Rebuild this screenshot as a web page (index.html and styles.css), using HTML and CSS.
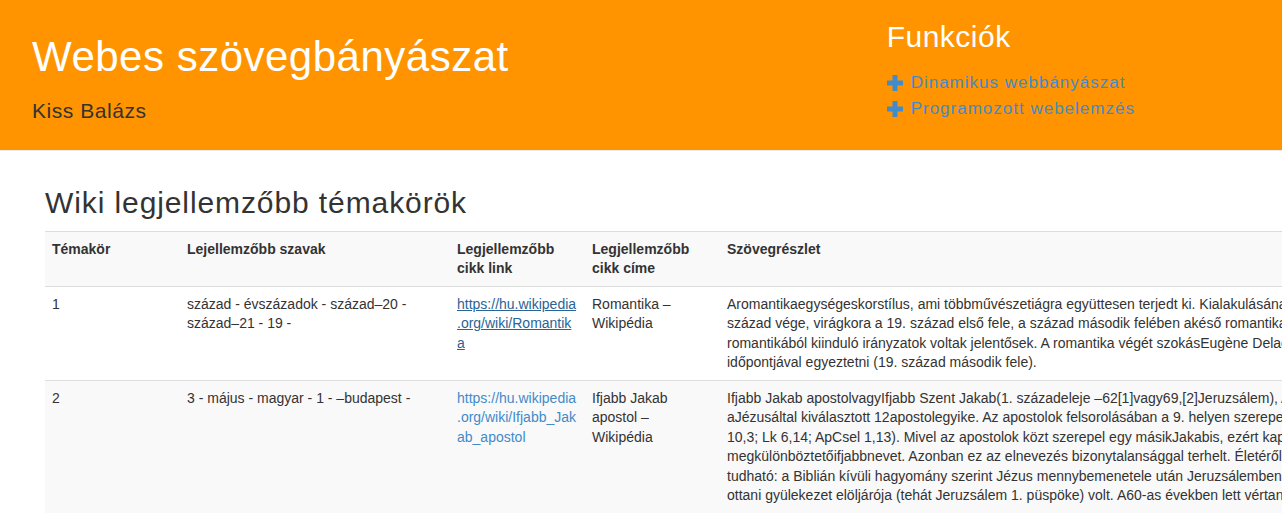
FILE: index.html
```html
<!DOCTYPE html>
<html lang="hu">
<head>
<meta charset="utf-8">
<title>Webes szövegbányászat</title>
<link rel="stylesheet" href="styles.css">
</head>
<body>
<header class="site-header">
  <div class="brand">
    <h1 class="brand-title">Webes szövegbányászat</h1>
    <p class="brand-author">Kiss Balázs</p>
  </div>
  <nav class="features">
    <h3 class="features-title">Funkciók</h3>
    <ul class="features-list">
      <li><a href="#" class="feature-link"><svg class="plus" viewBox="0 0 16 16" width="16" height="16"><rect x="5.5" y="0" width="5" height="16"/><rect x="0" y="5.5" width="16" height="5"/></svg><span>Dinamikus webbányászat</span></a></li>
      <li><a href="#" class="feature-link"><svg class="plus" viewBox="0 0 16 16" width="16" height="16"><rect x="5.5" y="0" width="5" height="16"/><rect x="0" y="5.5" width="16" height="5"/></svg><span>Programozott webelemzés</span></a></li>
    </ul>
  </nav>
</header>
<main class="content">
  <h2 class="page-title">Wiki legjellemzőbb témakörök</h2>
  <table class="topics">
    <colgroup>
      <col class="c-narrow"><col class="c-wide"><col class="c-narrow"><col class="c-narrow"><col class="c-text">
    </colgroup>
    <tbody>
      <tr>
        <th>Témakör</th>
        <th>Lejellemzőbb szavak</th>
        <th>Legjellemzőbb cikk link</th>
        <th>Legjellemzőbb cikk címe</th>
        <th>Szövegrészlet</th>
      </tr>
      <tr>
        <td>1</td>
        <td>század - évszázadok - század–20 - század–21 - 19 -</td>
        <td class="link-cell"><a href="#" class="wiki-link is-active">https://hu.wikipedia<br>.org/wiki/Romantik<br>a</a></td>
        <td>Romantika – Wikipédia</td>
        <td>Aromantikaegységeskorstílus, ami többművészetiágra együttesen terjedt ki. Kialakulásának ideje a 18. század vége, virágkora a 19. század első fele, a század második felében akéső romantika és a romantikából kiinduló irányzatok voltak jelentősek. A romantika végét szokásEugène Delacroix halálának időpontjával egyeztetni (19. század második fele).</td>
      </tr>
      <tr>
        <td>2</td>
        <td>3 - május - magyar - 1 - –budapest -</td>
        <td class="link-cell"><a href="#" class="wiki-link">https://hu.wikipedia<br>.org/wiki/Ifjabb_Jak<br>ab_apostol</a></td>
        <td>Ifjabb Jakab apostol – Wikipédia</td>
        <td>Ifjabb Jakab apostolvagyIfjabb Szent Jakab(1. századeleje –62[1]vagy69,[2]Jeruzsálem), Alfeus fia, aJézusáltal kiválasztott 12apostolegyike. Az apostolok felsorolásában a 9. helyen szerepel (Mk 3,18; Mt 10,3; Lk 6,14; ApCsel 1,13). Mivel az apostolok közt szerepel egy másikJakabis, ezért kapta a megkülönböztetőifjabbnevet. Azonban ez az elnevezés bizonytalansággal terhelt. Életéről csak kevés tudható: a Biblián kívüli hagyomány szerint Jézus mennybemenetele után Jeruzsálemben maradt, és az ottani gyülekezet elöljárója (tehát Jeruzsálem 1. püspöke) volt. A60-as években lett vértanú.</td>
      </tr>
    </tbody>
  </table>
</main>
</body>
</html>
```
FILE: styles.css
```css
html, body {
  margin: 0;
  padding: 0;
  overflow: hidden;
}
body {
  font-family: "Liberation Sans", Arial, sans-serif;
  font-size: 14px;
  line-height: 1.42857;
  color: #333;
  background: #fff;
  width: 1282px;
  height: 515px;
}
.site-header {
  display: grid;
  grid-template-columns: 2fr 1fr;
  height: 150px;
  background: #ff9400;
  border-bottom: 1px solid #ececec;
}
.brand {
  padding: 0 15px 0 32px;
}
.brand-title {
  margin: 34px 0 0;
  font-size: 42px;
  font-weight: normal;
  letter-spacing: 0.5px;
  line-height: 46px;
  color: #fff;
}
.brand-author {
  margin: 16px 0 0;
  font-size: 21px;
  letter-spacing: 0.55px;
  line-height: 30px;
  color: #333;
}
.features {
  padding: 0 15px 0 32px;
}
.features-title {
  margin: 20px 0 0;
  font-size: 30px;
  font-weight: normal;
  letter-spacing: 0.5px;
  line-height: 33px;
  color: #fff;
}
.features-list {
  list-style: none;
  margin: 17px 0 0;
  padding: 0;
}
.features-list li {
  line-height: 26px;
  height: 26px;
}
.feature-link {
  display: inline-flex;
  align-items: center;
  gap: 8px;
  font-size: 17px;
  letter-spacing: 1px;
  color: #428bca;
  text-decoration: none;
}
.plus {
  fill: #428bca;
  flex: none;
}
.content {
  padding: 0 0 0 45px;
}
.page-title {
  margin: 35px 0 12px;
  font-size: 30px;
  font-weight: normal;
  letter-spacing: 0.9px;
  line-height: 33px;
  color: #333;
}
.topics {
  border-collapse: collapse;
  border-spacing: 0;
  table-layout: fixed;
  width: 1355px;
}
.c-narrow { width: 135px; }
.c-wide { width: 270px; }
.c-text { width: 680px; }
.topics td, .topics th {
  padding: 7.5px 7.5px 7.5px 7px;
  line-height: 19.5px;
  vertical-align: top;
  text-align: left;
  border-top: 1px solid #ddd;
}
.topics td.link-cell {
  padding-right: 5px;
}
.topics th {
  font-weight: bold;
}
.topics tr:nth-child(odd) {
  background: #f9f9f9;
}
.wiki-link {
  color: #428bca;
  text-decoration: none;
  word-break: break-all;
}
.wiki-link.is-active {
  color: #2a6496;
  text-decoration: underline;
}
```
